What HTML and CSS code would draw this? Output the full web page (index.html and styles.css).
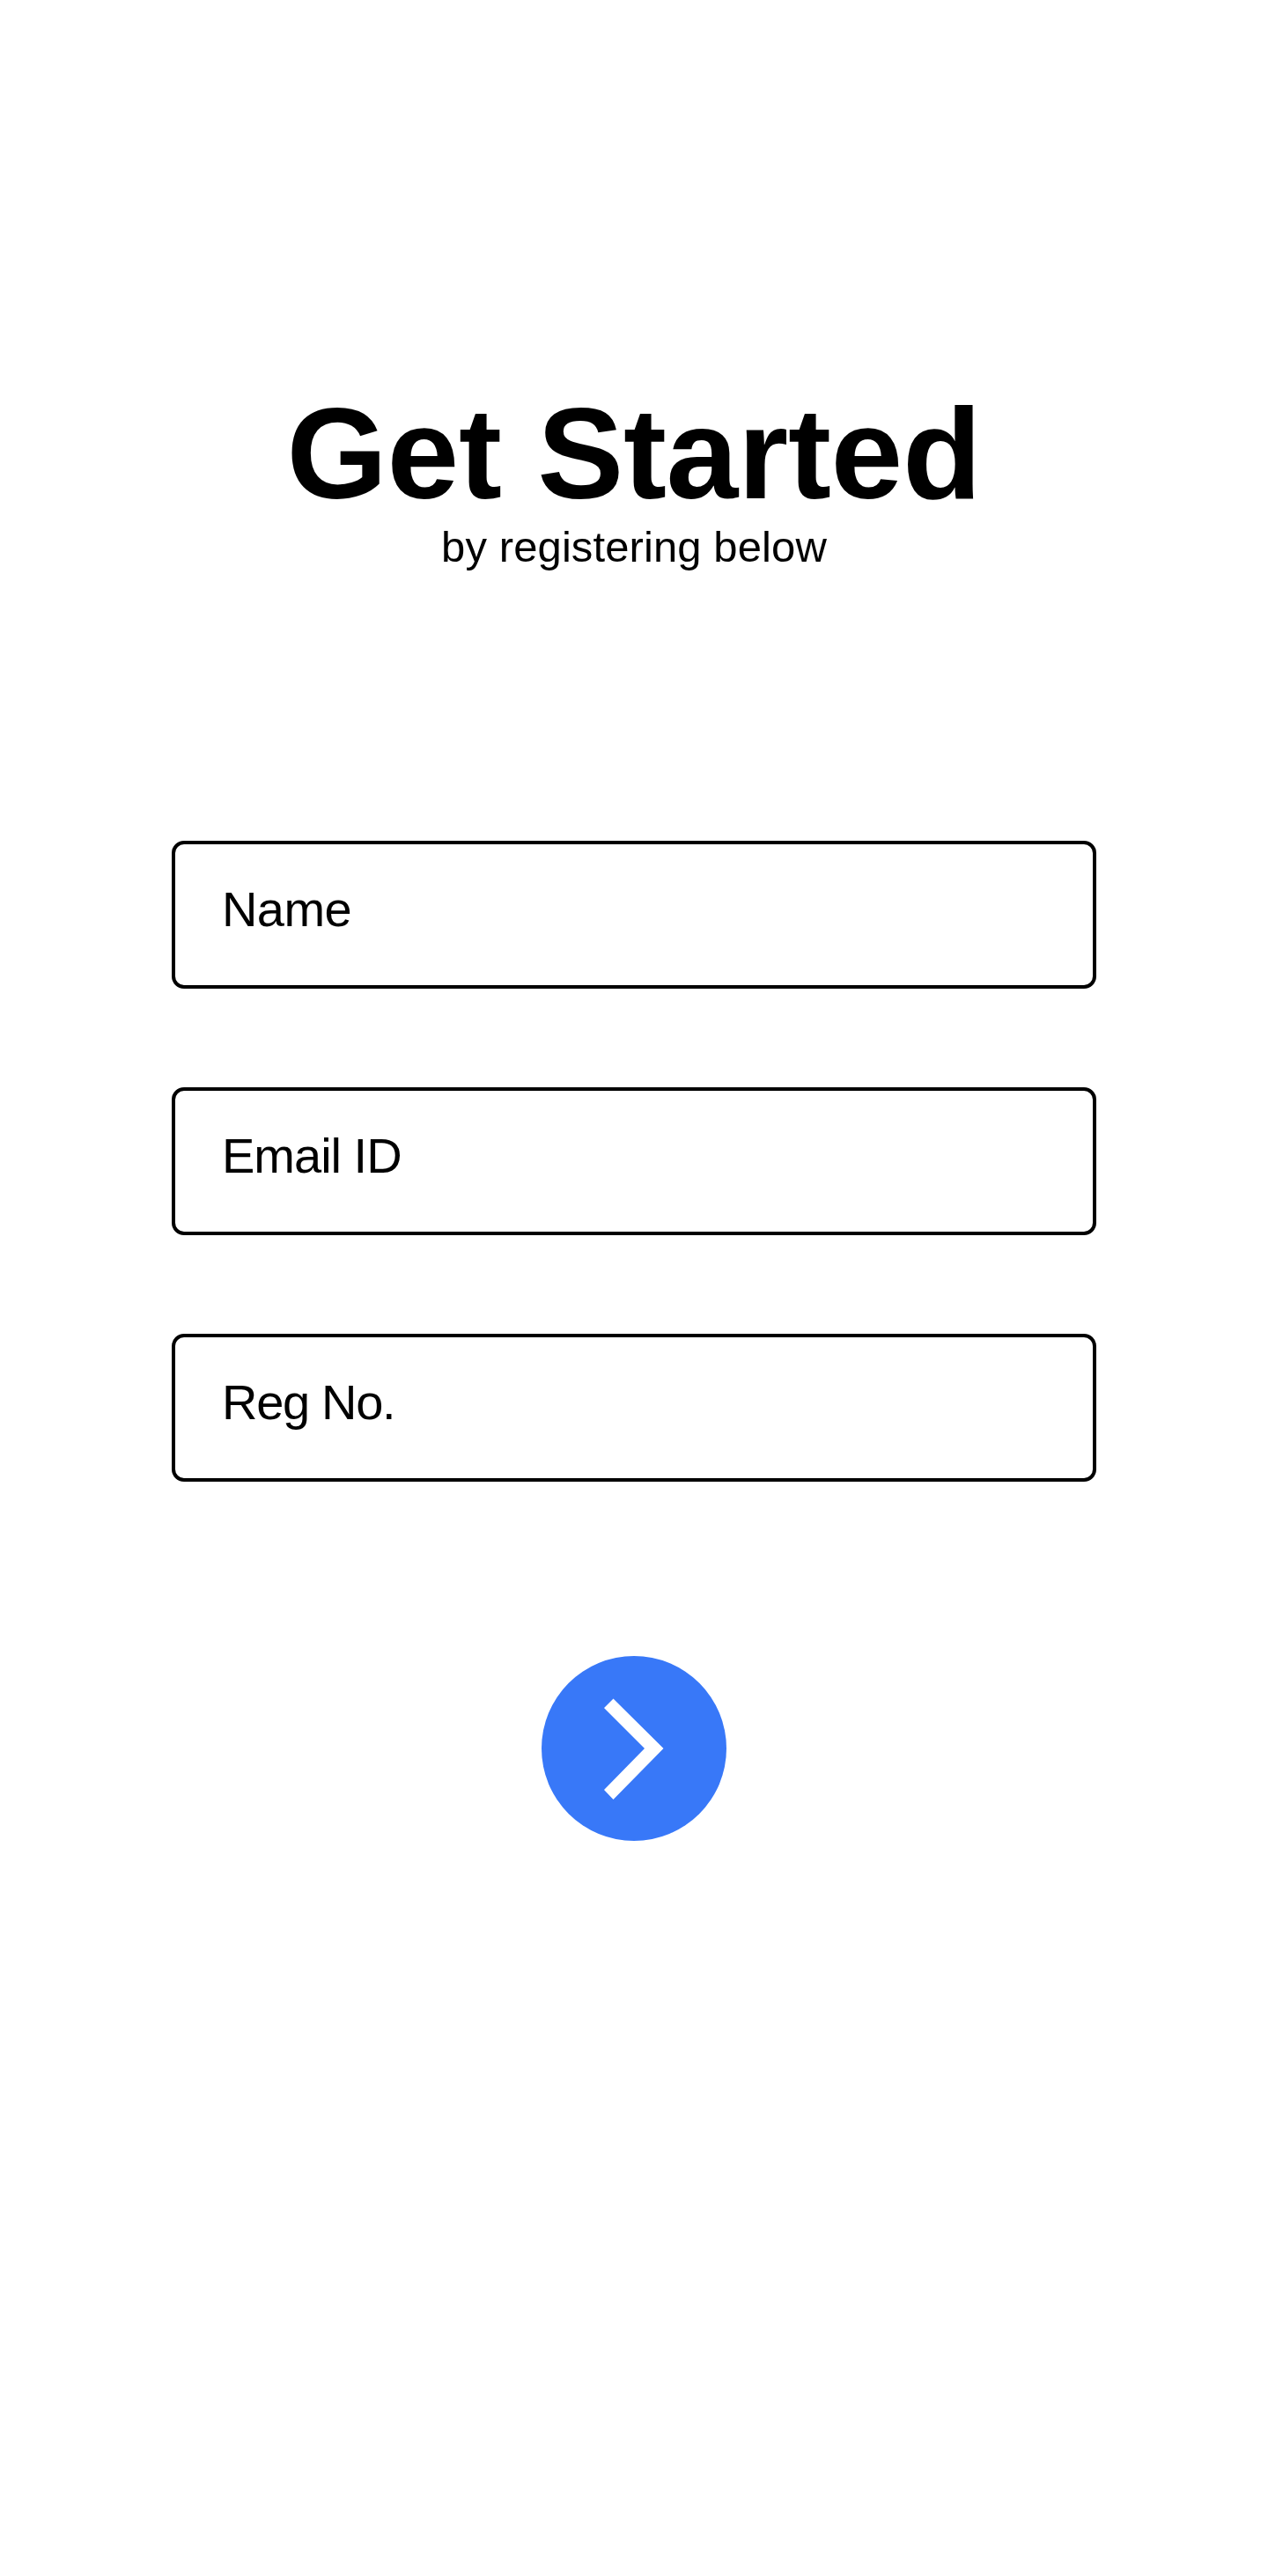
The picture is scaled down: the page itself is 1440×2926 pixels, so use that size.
FILE: index.html
```html
<!DOCTYPE html>
<html lang="en">
<head>
<meta charset="utf-8">
<title>Get Started</title>
<link rel="stylesheet" href="styles.css">
</head>
<body>
<main class="page">
  <header class="intro">
    <h1 class="title">Get Started</h1>
    <p class="subtitle">by registering below</p>
  </header>
  <form class="form">
    <div class="field"><span class="label label-name">Name</span></div>
    <div class="field"><span class="label label-email">Email ID</span></div>
    <div class="field"><span class="label label-reg">Reg No.</span></div>
    <button class="next" type="button" aria-label="Next">
      <svg width="210" height="210" viewBox="0 0 210 210" aria-hidden="true">
        <path d="M81.5 48.5 138.5 105 81.5 163 71 152 117 105 71 59Z" fill="#fff"/>
      </svg>
    </button>
  </form>
</main>
</body>
</html>
```
FILE: styles.css
```css
body {
  margin: 0;
  background: #fff;
  color: #000;
  font-family: "Liberation Sans", Arial, sans-serif;
}

.page {
  box-sizing: border-box;
  min-height: 2926px;
  padding-top: 440px;
  display: flex;
  flex-direction: column;
  align-items: center;
}

.intro {
  height: 515px;
  text-align: center;
}

.title {
  margin: 0;
  font-size: 147px;
  line-height: 150px;
  font-weight: 700;
  letter-spacing: -0.3px;
}

.subtitle {
  margin: 1px 0 0;
  font-size: 49px;
  line-height: 60px;
  letter-spacing: 0.1px;
}

.form {
  width: 1050px;
  display: flex;
  flex-direction: column;
  gap: 112px;
}

.field {
  box-sizing: border-box;
  height: 168px;
  padding: 42px 53px;
  border: 4px solid #000;
  border-radius: 14px;
}

.label {
  display: block;
  font-size: 56px;
  line-height: 64px;
  white-space: nowrap;
}

.label-name {
  letter-spacing: -0.6px;
}

.label-email {
  letter-spacing: -1px;
}

.label-reg {
  letter-spacing: -1.3px;
}

.next {
  align-self: center;
  width: 210px;
  height: 210px;
  margin-top: 86px;
  padding: 0;
  border: 0;
  border-radius: 50%;
  background: #3878f8;
}

.next svg {
  display: block;
}
```
